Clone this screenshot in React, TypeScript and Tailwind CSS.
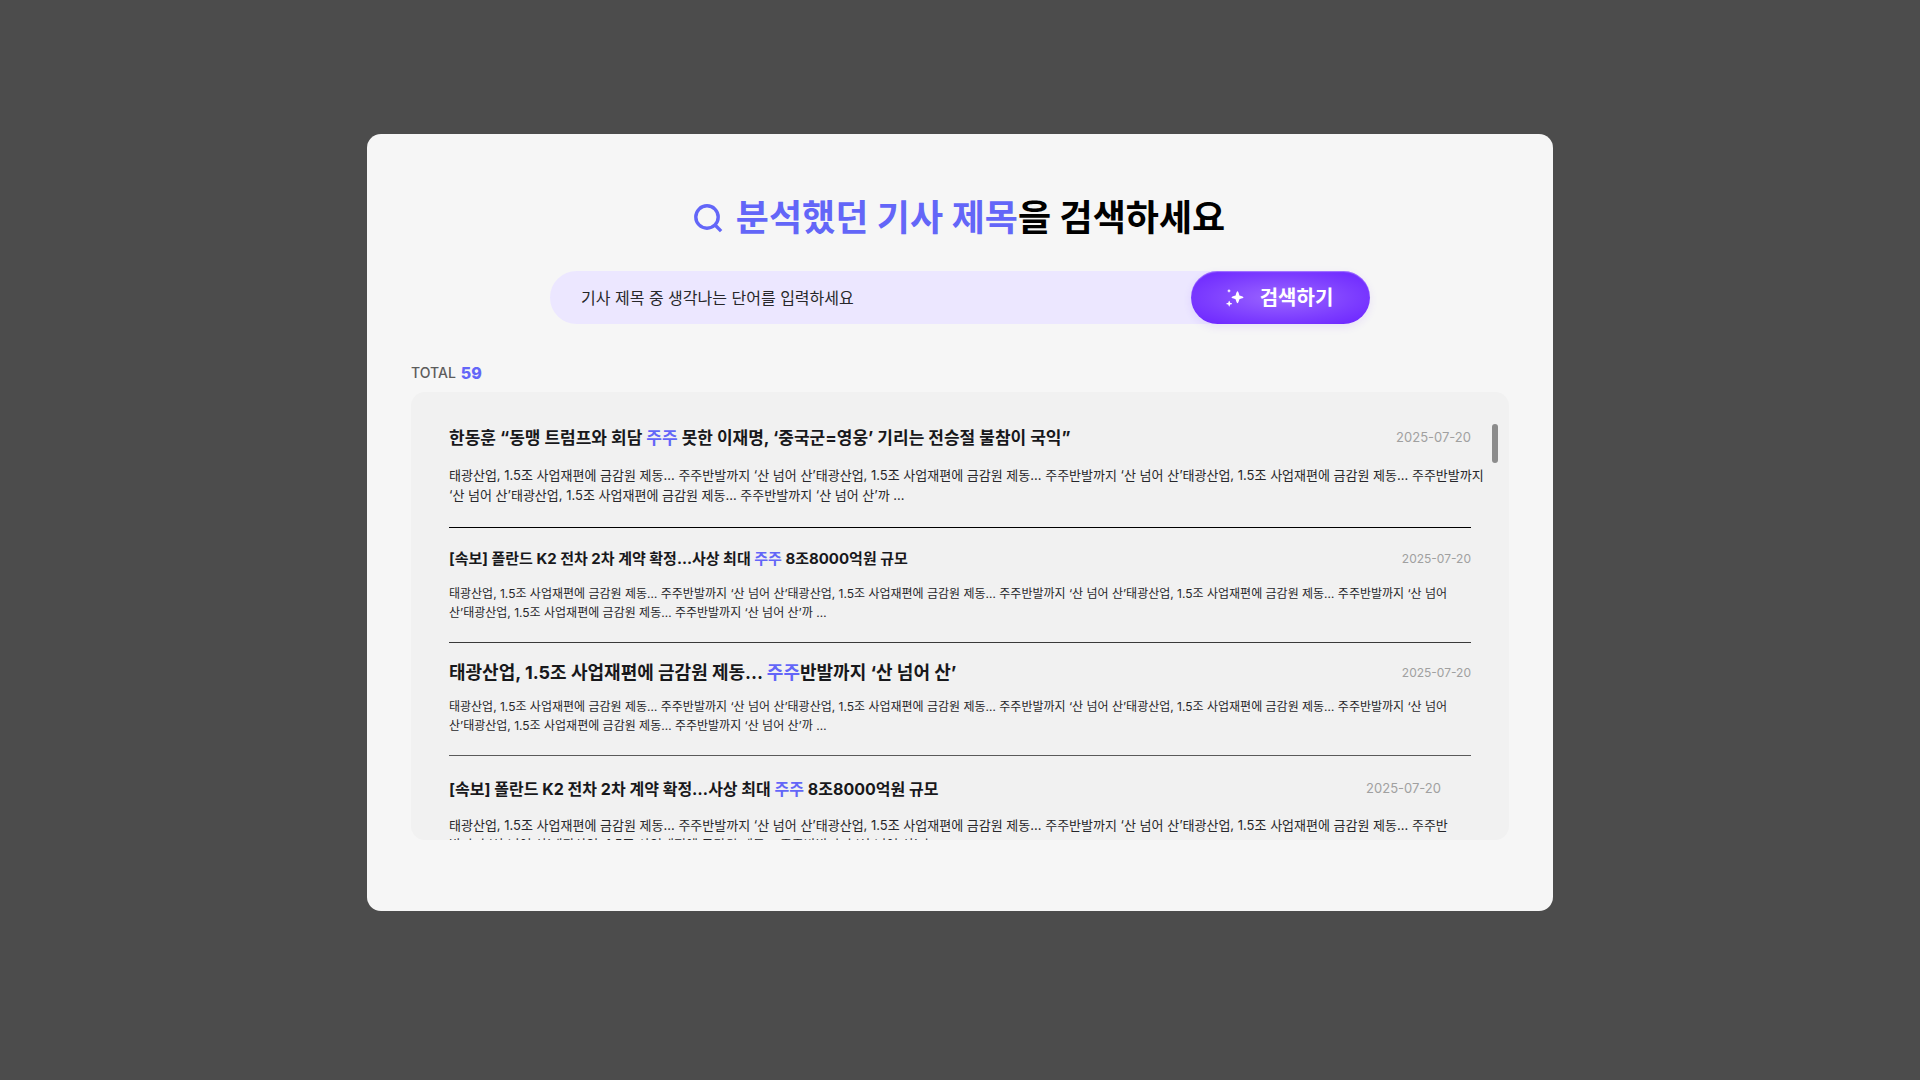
import React from "react";

type Article = {
  before: string;
  keyword: string;
  after: string;
  date: string;
  lines: string[];
  item: string;
  title: string;
  dateClass: string;
  body: string;
};

const SUMMARY = "태광산업, 1.5조 사업재편에 금감원 제동… 주주반발까지 ‘산 넘어 산’";
const SUMMARY_START = "태광산업, 1.5조 사업재편에 금감원 제동… ";

const articles: Article[] = [
  {
    before: "한동훈 “동맹 트럼프와 회담 ",
    keyword: "주주",
    after: " 못한 이재명, ‘중국군=영웅’ 기리는 전승절 불참이 국익”",
    date: "2025-07-20",
    lines: [
      SUMMARY + SUMMARY + SUMMARY_START + "주주반발까지",
      "‘산 넘어 산’" + SUMMARY + "까 …",
    ],
    item: "pt-8 pb-[22px] border-b border-black",
    title: "text-[17px]",
    dateClass: "text-[13px]",
    body: "mt-[13px] text-[13px] leading-5",
  },
  {
    before: "[속보] 폴란드 K2 전차 2차 계약 확정…사상 최대 ",
    keyword: "주주",
    after: " 8조8000억원 규모",
    date: "2025-07-20",
    lines: [
      SUMMARY + SUMMARY + SUMMARY_START + "주주반발까지 ‘산 넘어",
      "산’" + SUMMARY + "까 …",
    ],
    item: "pt-[17px] pb-5 border-b border-[#3a3a3a]",
    title: "text-[15px]",
    dateClass: "text-[12px]",
    body: "mt-[11px] text-[12px] leading-[19px]",
  },
  {
    before: "태광산업, 1.5조 사업재편에 금감원 제동… ",
    keyword: "주주",
    after: "반발까지 ‘산 넘어 산’",
    date: "2025-07-20",
    lines: [
      SUMMARY + SUMMARY + SUMMARY_START + "주주반발까지 ‘산 넘어",
      "산’" + SUMMARY + "까 …",
    ],
    item: "pt-4 pb-5 border-b border-[#5a5a5a]",
    title: "text-[18px]",
    dateClass: "text-[12px]",
    body: "mt-[10px] text-[12px] leading-[19px]",
  },
  {
    before: "[속보] 폴란드 K2 전차 2차 계약 확정…사상 최대 ",
    keyword: "주주",
    after: " 8조8000억원 규모",
    date: "2025-07-20",
    lines: [
      SUMMARY + SUMMARY + SUMMARY_START + "주주반",
      "발까지 ‘산 넘어 산’" + SUMMARY + "까 …",
    ],
    item: "pt-[19px] pr-[30px]",
    title: "text-[16px]",
    dateClass: "text-[13px]",
    body: "mt-[13px] text-[13px] leading-[19px]",
  },
];

function SearchIcon() {
  return (
    <svg className="size-8 shrink-0" viewBox="0 0 32 32" fill="none" stroke="#6366f8" strokeWidth="3.4" aria-hidden="true">
      <circle cx="14" cy="15" r="11.2" />
      <path d="M21.8 22.8 28.1 29.1" />
    </svg>
  );
}

function SparkleIcon() {
  return (
    <svg className="size-[18px] shrink-0" viewBox="0 0 18 18" fill="white" aria-hidden="true">
      <path d="M11.5 2.3Q12.3 2.3 13.4 6.4Q17.5 7.5 17.5 8.3Q17.5 9.1 13.4 10.2Q12.3 14.3 11.5 14.3Q10.7 14.3 9.6 10.2Q5.5 9.1 5.5 8.3Q5.5 7.5 9.6 6.4Q10.7 2.3 11.5 2.3Z" />
      <path d="M3.2 11.7Q3.6 11.7 4.1 13.8Q6.2 14.3 6.2 14.7Q6.2 15.1 4.1 15.6Q3.6 17.7 3.2 17.7Q2.8 17.7 2.3 15.6Q.2 15.1 .2 14.7Q.2 14.3 2.3 13.8Q2.8 11.7 3.2 11.7Z" />
      <path d="M3 0 3.7 1.2 4.9 1.9 3.7 2.6 3 3.8 2.3 2.6 1.1 1.9 2.3 1.2Z" />
    </svg>
  );
}

function ArticleItem({ article }: { article: Article }) {
  return (
    <li className={article.item}>
      <div className="flex items-start justify-between gap-4">
        <h2 className={`${article.title} leading-7 font-bold whitespace-nowrap text-[#18181b]`}>
          {article.before}
          <span className="text-[#6366f8]">{article.keyword}</span>
          {article.after}
        </h2>
        <time dateTime={article.date} className={`${article.dateClass} leading-[27px] text-[#a0a0a0]`}>
          {article.date}
        </time>
      </div>
      <p className={`${article.body} whitespace-nowrap text-[#27272a]`}>
        {article.lines[0]}
        <br />
        {article.lines[1]}
      </p>
    </li>
  );
}

export default function App() {
  return (
    <div className="flex min-h-screen items-start justify-center bg-[#4c4c4c] pt-[134px] font-['Inter','Noto_Sans_CJK_KR',sans-serif]" lang="ko">
      <main className="w-full max-w-[1186px] rounded-[14px] bg-[#f6f6f6] px-11 pt-[58px] pb-[71px]">
        <h1 className="flex items-center justify-center gap-[11px] pr-0.5 text-[36px] leading-[52px] font-bold text-black">
          <SearchIcon />
          <span>
            <span className="text-[#6366f8]">분석했던 기사 제목</span>을 검색하세요
          </span>
        </h1>

        <form
          className="mx-auto mt-[27px] flex h-[53px] w-full max-w-[820px] rounded-full bg-[#ece7ff]"
          onSubmit={(e) => e.preventDefault()}
        >
          <input
            type="text"
            aria-label="기사 제목 검색"
            placeholder="기사 제목 중 생각나는 단어를 입력하세요"
            className="min-w-0 flex-1 bg-transparent pl-[31px] text-[16px] text-[#27272a] outline-none placeholder:text-[#27272a]"
          />
          <button
            type="submit"
            className="flex w-[179px] items-center justify-center gap-4 rounded-full bg-[radial-gradient(ellipse_at_center,#9b66ff_0%,#7c3cff_60%,#6a22ff_100%)] pr-0.5 text-[20px] font-bold text-white shadow-[0_3px_8px_rgba(105,35,255,0.1),inset_0_1px_1px_rgba(255,255,255,0.35)]"
          >
            <SparkleIcon />
            <span className="pt-px">검색하기</span>
          </button>
        </form>

        <p className="mt-[37px] flex items-center gap-[5px] leading-6">
          <span className="text-[14px] font-medium text-[#5c5c5c]">TOTAL</span>
          <strong className="text-[16px] font-extrabold text-[#6366f8]">59</strong>
        </p>

        <section aria-label="검색 결과" className="mt-[7px] flex h-112 overflow-hidden rounded-[14px] bg-[#f1f1f1] pr-[11px] pl-[38px]">
          <ul className="min-w-0 flex-1">
            {articles.map((article, i) => (
              <ArticleItem key={i} article={article} />
            ))}
          </ul>
          <div className="mt-8 ml-[21px] h-[39px] w-1.5 shrink-0 rounded-full bg-[#8c8c8c]" />
        </section>
      </main>
    </div>
  );
}
